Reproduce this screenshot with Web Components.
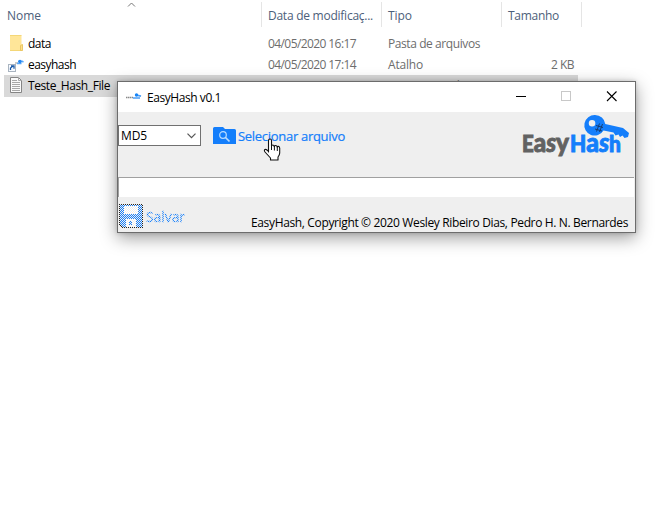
<!DOCTYPE html>
<html lang="pt-BR">
<head>
<meta charset="utf-8">
<title>EasyHash</title>
<style>
body{margin:0;width:661px;height:530px;background:#fff;overflow:hidden;font:12px/20px "Open Sans","Noto Sans",sans-serif;position:relative}
</style>
</head>
<body>
<file-list></file-list>
<hash-window></hash-window>
<script>
// A single-line label whose letter spacing is adjusted to a given width.
class FitText extends HTMLElement{
  connectedCallback(){
    const r=this.attachShadow({mode:'open'});
    r.innerHTML='<style>:host{display:inline-block;white-space:nowrap}span{display:inline-block}</style><span></span>';
    const s=r.querySelector('span');
    s.textContent=this.getAttribute('text');
    const w=+this.getAttribute('w');
    this.style.width=w+'px';
    const n=s.textContent.length;
    s.style.letterSpacing=((w-s.getBoundingClientRect().width)/n)+'px';
  }
}
customElements.define('fit-text',FitText);

class FileRow extends HTMLElement{
  connectedCallback(){
    this.attachShadow({mode:'open'}).innerHTML=`<style>
    :host{display:grid;grid-template-columns:257px 120px 120px 77px;width:574px;height:21px;margin-left:4px;line-height:22px;color:#6d6d6d}
    :host([selected]){background:#d9d9d9;height:22px;line-height:22px}
    .n{display:flex;color:#000}.i{width:24px;height:21px;display:block}
    .c{padding-left:7px;overflow:hidden}.s{text-align:right;padding-right:4px}
    </style><div class="n"><div class="i"><slot name="icon"></slot></div><slot name="name"></slot></div><div class="c"><slot name="date"></slot></div><div class="c"><slot name="type"></slot></div><div class="s"><slot name="size"></slot></div>`;
  }
}
customElements.define('file-row',FileRow);

class FileList extends HTMLElement{
  connectedCallback(){
    this.attachShadow({mode:'open'}).innerHTML=`<style>
    :host{display:block}
    svg{display:block}
    .h{display:grid;grid-template-columns:262px 120px 120px 80px;height:33px;color:#4c607a}
    .h>div{height:25px;margin-top:2px;line-height:27px;border-right:1px solid #e5e5e5;padding-left:6px;box-sizing:border-box}
    .h>.first{padding-left:7px;display:flex;justify-content:space-between}
    .first svg{margin-right:125px}
    </style>
    <div class="h"><div class="first"><fit-text text="Nome" w="34"></fit-text><svg width="9" height="6" viewBox="0 0 9 6"><path d="M1 4.500 4.500 1 8 4.500" fill="none" stroke="#777"/></svg></div>
    <div><fit-text text="Data de modificaç..." w="105"></fit-text></div><div><fit-text text="Tipo" w="24"></fit-text></div><div><fit-text text="Tamanho" w="51"></fit-text></div></div>
    <file-row>
      <svg slot="icon" width="24" height="21" viewBox="0 0 24 21"><path d="M6 2.500h11.500v9h1V18h-12.500z" fill="#ffe699"/><path d="M6 2.500h11.500M6 17.500h11" stroke="#f4d778"/><path d="M16.500 17.500v-5l2-1v6z" fill="#ffe08a" stroke="#e5bf58" stroke-width=".8"/></svg>
      <fit-text slot="name" text="data" w="23"></fit-text><fit-text slot="date" text="04/05/2020 16:17" w="88"></fit-text><fit-text slot="type" text="Pasta de arquivos" w="92"></fit-text>
    </file-row>
    <file-row>
      <svg slot="icon" width="24" height="21" viewBox="0 0 24 21"><path d="M11 9h3" stroke="#999"/><path d="M13 9.500h4.500M14 7.500h2M17.500 7l2 1" stroke="#5aa8f8" stroke-width="1.500"/><circle cx="16" cy="7.500" r="1.800" fill="#2488f3"/><rect x="4.500" y="10.500" width="7" height="7" fill="#f8fbff" stroke="#a9b4c0"/><path d="M6.500 16v-2l2.500-2M7 11.800h3v3" fill="none" stroke="#1959a8" stroke-width="1.300"/></svg>
      <fit-text slot="name" text="easyhash" w="48"></fit-text><fit-text slot="date" text="04/05/2020 17:14" w="88"></fit-text><fit-text slot="type" text="Atalho" w="35"></fit-text><fit-text slot="size" text="2 KB" w="23"></fit-text>
    </file-row>
    <file-row selected>
      <svg slot="icon" width="24" height="21" viewBox="0 0 24 21"><path d="M6.500 2.500h8l3 3v12h-11z" fill="#fafafa" stroke="#858585"/><path d="M14.500 2.500v3h3M8 5.500h5M8 7.500h8M8 9.500h8M8 11.500h8M8 13.500h8M8 15.500h8" fill="none" stroke="#a8a8a8"/></svg>
      <fit-text slot="name" text="Teste_Hash_File" w="82"></fit-text><fit-text slot="date" text="04/05/2020 17:13" w="88"></fit-text><fit-text slot="type" text="Documento de Te..." w="101"></fit-text><fit-text slot="size" text="11 KB" w="28"></fit-text>
    </file-row>`;
  }
}
customElements.define('file-list',FileList);

class TitleBar extends HTMLElement{
  connectedCallback(){
    this.attachShadow({mode:'open'}).innerHTML=`<style>
    :host{display:flex;align-items:center;height:30px;background:#fff;color:#000}
    .icon{margin:0 5px 0 7px}.t{flex:1;line-height:31px;height:30px}
    </style>
    <svg class="icon" width="17" height="10" viewBox="0 0 17 10"><path d="M1 5.500h7" stroke="#888" stroke-width="1.600" stroke-dasharray="1.500 .5"/><path d="M8 6h7M11 3l5 1.200" stroke="#4b9df5" stroke-width="1.700" fill="none"/><circle cx="11.500" cy="3" r="1.700" fill="#1685f7"/></svg>
    <div class="t"><slot></slot></div>
    <svg width="120" height="30" viewBox="0 0 120 30" shape-rendering="crispEdges"><path d="M1 14.500h10" stroke="#000"/><rect x="46.500" y="9.500" width="9" height="9" fill="none" stroke="#c8c8c8"/><path d="M92 9.500l9.500 9.500M101.500 9.500 92 19" stroke="#000" stroke-width="1.100" shape-rendering="auto"/></svg>`;
  }
}
customElements.define('title-bar',TitleBar);

class ComboBox extends HTMLElement{
  connectedCallback(){
    this.attachShadow({mode:'open'}).innerHTML=`<style>
    :host{display:flex;justify-content:space-between;align-items:center;box-sizing:border-box;width:83px;height:21px;border:1px solid #707070;background:#fff;padding:0 4px 0 2px;line-height:19px;color:#000}
    </style><slot></slot><svg width="9" height="6" viewBox="0 0 9 6"><path d="M.5.700 4.500 4.700 8.500.7" fill="none" stroke="#555" stroke-width="1.200"/></svg>`;
  }
}
customElements.define('combo-box',ComboBox);

class EasyLogo extends HTMLElement{
  connectedCallback(){
    this.attachShadow({mode:'open'}).innerHTML=`<style>:host{display:block}svg{display:block}text{font-family:Lato,"Open Sans",sans-serif;font-weight:900;font-size:22px}.b{font-size:26px}.i{font-style:italic}</style>
    <svg width="110" height="50" viewBox="0 0 110 50">
    <path fill="#147efb" fill-rule="evenodd" d="M74 2a10.300 10.300 0 0 1 10.300 9L102 15l6 5-1 4-3.500 1-2-2.500-2.500 1.500-1.500-2.500-3 1-2-3-10-2A10.300 10.300 0 1 1 74 2zM71 7a3.300 3.300 0 1 0 .1 6.600A3.300 3.300 0 0 0 71 7z"/>
    <path d="M75 12.500l7 2M74 16l7 2M78.500 10.500l-3 8M81.500 11l-3 8" stroke="#143c70" stroke-width="1" fill="none"/>
    <text x="1" y="39" textLength="47" lengthAdjust="spacingAndGlyphs" fill="#626262" stroke="#626262" stroke-width=".9">E<tspan class="b">a<tspan class="i">s</tspan>y</tspan></text><text x="49" y="39" textLength="51" lengthAdjust="spacingAndGlyphs" fill="#147efb" stroke="#147efb" stroke-width=".9">H<tspan class="b">a<tspan class="i">s</tspan></tspan>h</text></svg>`;
  }
}
customElements.define('easy-logo',EasyLogo);

class SaveButton extends HTMLElement{
  connectedCallback(){
    this.attachShadow({mode:'open'}).innerHTML=`<style>
    :host{display:flex;align-items:center;gap:3px;height:24px;font-size:14px;font-weight:500;line-height:25px}
    .l{color:transparent;background:repeating-conic-gradient(#147efb 0 25%,#cfdff2 0 50%) 0 0/2px 2px;-webkit-background-clip:text;background-clip:text;-webkit-text-stroke:.3px transparent}
    svg{display:block}</style>
    <svg width="24" height="24" viewBox="0 0 24 24" shape-rendering="crispEdges">
    <defs><pattern id="b" width="2" height="2" patternUnits="userSpaceOnUse"><path fill="#efefef" d="M0 0h2v2H0z"/><path fill="#147efb" d="M0 0h1v1H0zM1 1h1v1H1z"/></pattern><pattern id="k" width="2" height="2" patternUnits="userSpaceOnUse"><path fill="#efefef" d="M0 0h2v2H0z"/><path fill="#222" d="M0 0h1v1H0zM1 1h1v1H1z"/></pattern><pattern id="w" width="2" height="2" patternUnits="userSpaceOnUse"><path fill="#efefef" d="M0 0h2v2H0z"/><path fill="#fff" d="M0 0h1v1H0zM1 1h1v1H1z"/></pattern></defs>
    <path fill="url(#k)" d="M0 0h24v24H3L0 21z"/><path fill="url(#b)" d="M1 1h22v22H3l-2-2z"/><path fill="url(#w)" d="M5 2h14v8H5zM7 15h10v8H7z"/><path fill="url(#b)" d="M10 17h3v4h-3z"/></svg>
    <div class="l"><slot></slot></div>`;
  }
}
customElements.define('save-button',SaveButton);

class PickButton extends HTMLElement{
  connectedCallback(){
    this.attachShadow({mode:'open'}).innerHTML=`<style>
    :host{display:flex;gap:2px;color:#147efb;font-size:13px;font-weight:500;line-height:21px;-webkit-text-stroke:.2px #147efb}
    svg{display:block;margin-top:1px}</style>
    <svg width="23" height="18" viewBox="0 0 23 18"><path fill="#147efb" d="M0 1.500Q0 0 1.500 0H10l2 2h9.500q1.500 0 1.500 1.500V17H0z"/><circle cx="10" cy="8" r="3.300" fill="none" stroke="#b9dcff" stroke-width="1.200"/><path d="M12.500 10.500l4 4" stroke="#b9dcff" stroke-width="1.700"/></svg><slot></slot>`;
  }
}
customElements.define('pick-button',PickButton);

class HashWindow extends HTMLElement{
  connectedCallback(){
    this.attachShadow({mode:'open'}).innerHTML=`<style>
    :host{display:block;position:absolute;left:117px;top:81px;width:519px;height:152px;box-sizing:border-box;border:1px solid #6c6c6c;background:#efefef;box-shadow:0 5px 16px rgba(0,0,0,.38),0 0 4px rgba(0,0,0,.18)}
    .top{display:flex;height:65px;align-items:flex-start}
    combo-box{margin:13px 12px 0 0}pick-button{margin-top:14px}easy-logo{margin:1px 0 0 auto;padding-right:4px}
    .field{height:20px;box-sizing:border-box;background:#fff;border:solid #a0a0a0;border-width:1px 0 0 1px;margin-right:1px}
    .foot{display:flex;justify-content:space-between;height:35px;padding:0 7px 0 1px}
    save-button{margin-top:7px}.copy{margin-top:16px;height:19px;color:#000}
    .cursor{position:absolute;left:145px;top:56px}
    </style>
    <title-bar><fit-text text="EasyHash v0.1" w="74"></fit-text></title-bar>
    <div class="top"><combo-box><fit-text text="MD5" w="26"></fit-text></combo-box><pick-button><fit-text text="Selecionar arquivo" w="107"></fit-text></pick-button><easy-logo></easy-logo></div>
    <div class="field"></div>
    <div class="foot"><save-button><fit-text text="Salvar" w="39"></fit-text></save-button><fit-text class="copy" text="EasyHash, Copyright © 2020 Wesley Ribeiro Dias, Pedro H. N. Bernardes" w="377"></fit-text></div>
    <svg class="cursor" width="19" height="24" viewBox="0 0 19 24"><path d="M5.500 14V2.500q0-1.500 1.500-1.500t1.500 1.500V8q0-1 1.200-1t1.600 1.500q.3-1 1.400-1t1.500 1.500q.3-.8 1.300-.6t1.200 1.600V15q0 2-1.700 4v3H7.500v-2L2 14q-1.200-1.800 0-2.500t3.500 2z" fill="#fff" stroke="#111" stroke-width="1.100" stroke-linejoin="round"/><path d="M8.500 7v5M11.400 8v4.500M14.300 9v4" stroke="#111"/></svg>`;
  }
}
customElements.define('hash-window',HashWindow);
</script>
</body>
</html>
